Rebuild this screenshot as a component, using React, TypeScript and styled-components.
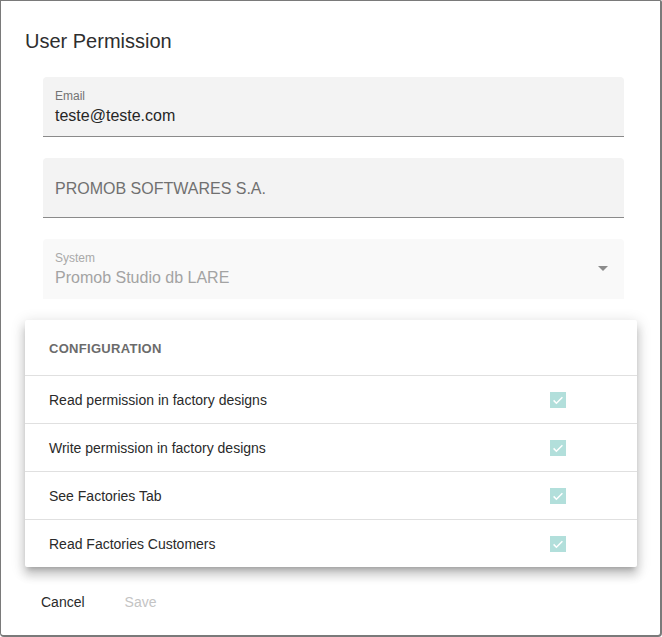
import styled, { createGlobalStyle } from "styled-components";

const GlobalStyle = createGlobalStyle`
  html, body {
    margin: 0;
    padding: 0;
    background: #ffffff;
  }
  body {
    font-family: "Liberation Sans", Arial, sans-serif;
  }
  * {
    box-sizing: border-box;
  }
`;

const permissions = [
  "Read permission in factory designs",
  "Write permission in factory designs",
  "See Factories Tab",
  "Read Factories Customers",
];

function CheckIcon() {
  return (
    <svg width="16" height="16" viewBox="0 0 16 16">
      <polyline
        points="3.6,8.4 6.4,11.2 12.4,5.2"
        fill="none"
        stroke="#ffffff"
        strokeWidth="1.5"
      />
    </svg>
  );
}

function App() {
  return (
    <>
      <GlobalStyle />
      <Dialog>
        <Title>User Permission</Title>
        <Content>
          <Field>
            <Label>Email</Label>
            <Value>teste@teste.com</Value>
          </Field>
          <Field $noLabel>
            <Value $muted>PROMOB SOFTWARES S.A.</Value>
          </Field>
          <Field $disabled>
            <Label $disabled>System</Label>
            <Value $disabled>Promob Studio db LARE</Value>
            <Arrow />
          </Field>
          <Card>
            <CardHeader>Configuration</CardHeader>
            {permissions.map((p) => (
              <Row key={p}>
                <RowText>{p}</RowText>
                <Check>
                  <CheckIcon />
                </Check>
              </Row>
            ))}
          </Card>
        </Content>
        <Actions>
          <Button>Cancel</Button>
          <Button $disabled>Save</Button>
        </Actions>
      </Dialog>
    </>
  );
}

const Dialog = styled.div`
  width: 662px;
  height: 637px;
  background: #ffffff;
  border: 1px solid #7a7a7a;
  border-right-width: 2px;
  border-bottom-width: 2px;
  border-radius: 0 2px 4px 4px;
  display: flex;
  flex-direction: column;
`;

const Title = styled.h2`
  margin: 0;
  padding: 24px 24px 0;
  font-size: 20px;
  line-height: 32px;
  font-weight: 400;
  color: #2e2e2e;
`;

const Content = styled.div`
  padding: 20px 23px 0 24px;
  display: flex;
  flex-direction: column;
  gap: 22px;
`;

const Field = styled.div<{ $noLabel?: boolean; $disabled?: boolean }>`
  position: relative;
  height: 60px;
  margin: 0 13px 0 18px;
  padding: ${(p) => (p.$noLabel ? "21px" : "12px")} 12px 0;
  background: ${(p) => (p.$disabled ? "#f9f9f9" : "#f3f3f3")};
  border-radius: 4px 4px 0 0;
  border-bottom: 1px solid ${(p) => (p.$disabled ? "transparent" : "#8a8a8a")};
  display: flex;
  flex-direction: column;
  & + & {
    margin-top: -1px;
  }
`;

const Label = styled.span<{ $disabled?: boolean }>`
  font-size: 12px;
  line-height: 14px;
  color: ${(p) => (p.$disabled ? "#a9a9a9" : "#737373")};
`;

const Value = styled.span<{ $muted?: boolean; $disabled?: boolean }>`
  margin-top: ${(p) => (p.$muted ? "0" : "3px")};
  font-size: 16px;
  line-height: 20px;
  color: ${(p) => (p.$disabled ? "#a3a3a3" : p.$muted ? "#707070" : "#262626")};
`;

const Arrow = styled.span`
  position: absolute;
  right: 16px;
  top: 27px;
  width: 0;
  height: 0;
  border-left: 5px solid transparent;
  border-right: 5px solid transparent;
  border-top: 5px solid #8c8c8c;
`;

const Card = styled.div`
  background: #ffffff;
  border-radius: 2px;
  margin-top: -1px;
  box-shadow: 0 5px 5px -3px rgba(0, 0, 0, 0.2), 0 8px 10px 1px rgba(0, 0, 0, 0.14),
    0 3px 14px 2px rgba(0, 0, 0, 0.12);
`;

const CardHeader = styled.div`
  height: 55px;
  padding: 1px 24px 0;
  display: flex;
  align-items: center;
  font-size: 13px;
  font-weight: 700;
  letter-spacing: 0.3px;
  text-transform: uppercase;
  color: #6b6b6b;
`;

const Row = styled.div`
  height: 48px;
  padding: 0 71px 0 24px;
  border-top: 1px solid #e0e0e0;
  display: flex;
  align-items: center;
  justify-content: space-between;
`;

const RowText = styled.span`
  font-size: 14px;
  color: #2a2a2a;
`;

const Check = styled.span`
  width: 16px;
  height: 16px;
  background: #b2dfdb;
  display: flex;
`;

const Actions = styled.div`
  margin-top: 17px;
  padding: 0 24px;
  display: flex;
  gap: 8px;
`;

const Button = styled.button<{ $disabled?: boolean }>`
  border: none;
  background: none;
  padding: 0 16px;
  height: 36px;
  font-family: inherit;
  font-size: 14px;
  color: ${(p) => (p.$disabled ? "#c4c4c4" : "#2a2a2a")};
  cursor: ${(p) => (p.$disabled ? "default" : "pointer")};
`;

export default App;
